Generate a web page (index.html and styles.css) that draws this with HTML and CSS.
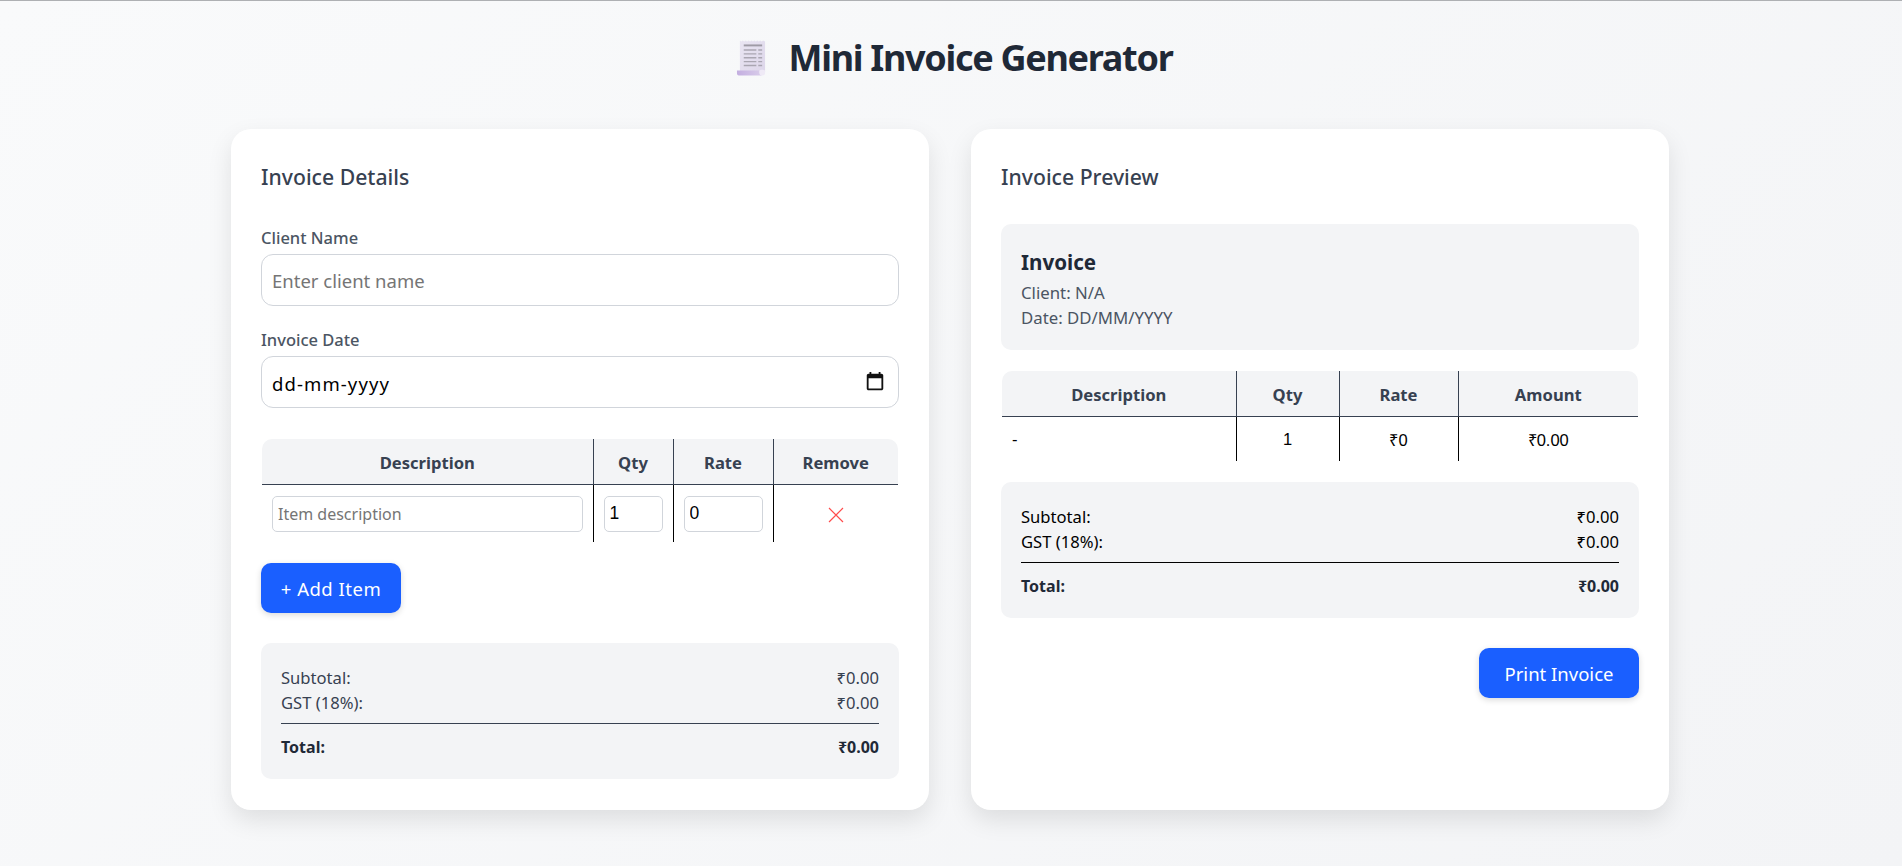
FILE: index.html
```html
<!DOCTYPE html>
<html lang="en">
<head>
<meta charset="utf-8">
<title>Mini Invoice Generator</title>
<link rel="stylesheet" href="styles.css">
</head>
<body>
<header class="page-head">
  <svg class="logo" viewBox="0 0 32 38" width="31" height="38" aria-hidden="true">
    <defs>
      <linearGradient id="paper" x1="0" y1="0" x2="1" y2="1"><stop offset="0" stop-color="#e9e5f2"/><stop offset="1" stop-color="#ddd6ea"/></linearGradient>
      <linearGradient id="roll" x1="0" y1="0" x2="1" y2="0"><stop offset="0" stop-color="#c3aee0"/><stop offset="1" stop-color="#d9cdea"/></linearGradient>
    </defs>
    <path d="M4 1l1.500 1L7 1l1.500 1L10 1l1.500 1L13 1l1.500 1L16 1l1.500 1L19 1l1.500 1L22 1l1.500 1L25 1l1.500 1L28 1l2 1v32H4z" fill="url(#paper)"/>
    <path d="M1 32h24v2c0 2 1 3 2 3H3c-1.500 0-2-1-2-2.500z" fill="url(#roll)"/>
    <path d="M24 32c1-1 5-1 6 0v3c0 1-1 2-3 2-2 0-3-1-3-3z" fill="#efeaf6"/>
    <path d="M8 5h19v2H8z" fill="#9f9ba6"/>
    <path d="M8 10h13v1.500H8zM23 10h4v1.500h-4zM8 14h13v1.500H8zM23 14h4v1.500h-4zM8 18h13v1.500H8zM23 18h4v1.500h-4zM8 22h13v1.500H8zM23 22h4v1.500h-4zM8 26h13v1.500H8zM23 26h4v1.500h-4z" fill="#aaa6b2"/>
  </svg>
  <h1 class="page-title">Mini Invoice Generator</h1>
</header>

<main class="columns">
  <section class="card">
    <h2 class="card-title card-title-form">Invoice Details</h2>
    <div class="field">
      <label class="field-label" for="client">Client Name</label>
      <input class="text-input" id="client" type="text" placeholder="Enter client name">
    </div>
    <div class="field">
      <span class="field-label">Invoice Date</span>
      <div class="text-input date-input">
        <span class="date-text">dd-mm-yyyy</span>
        <svg viewBox="0 0 24 24" width="22" height="22" aria-hidden="true"><path d="M19 3h-1V1h-2v2H8V1H6v2H5c-1.110 0-1.990.9-1.990 2L3 19c0 1.100.89 2 2 2h14c1.100 0 2-.9 2-2V5c0-1.100-.9-2-2-2zm0 16H5V8h14v11z" fill="#111"/></svg>
      </div>
    </div>

    <div class="table-wrap table-wrap-form">
      <table class="grid-table">
        <colgroup><col class="col-a"><col class="col-b"><col class="col-c"><col></colgroup>
        <thead><tr><th>Description</th><th>Qty</th><th>Rate</th><th>Remove</th></tr></thead>
        <tbody>
          <tr>
            <td><input class="cell-input cell-input-text" type="text" placeholder="Item description"></td>
            <td><input class="cell-input" type="text" value="1"></td>
            <td><input class="cell-input" type="text" value="0"></td>
            <td class="center">
              <button class="remove" type="button" aria-label="Remove">
                <svg viewBox="0 0 16 16" width="16" height="16" aria-hidden="true"><path d="M1 1l14 14M15 1L1 15" stroke="#ff4d4d" stroke-width="1.200" fill="none"/></svg>
              </button>
            </td>
          </tr>
        </tbody>
      </table>
    </div>

    <button class="btn btn-add" type="button">+ Add Item</button>

    <div class="summary">
      <div class="summary-row"><span>Subtotal:</span><span>₹0.00</span></div>
      <div class="summary-row"><span>GST (18%):</span><span>₹0.00</span></div>
      <div class="summary-row summary-total"><span>Total:</span><span>₹0.00</span></div>
    </div>
  </section>

  <section class="card">
    <h2 class="card-title">Invoice Preview</h2>
    <div class="preview-head">
      <h3 class="preview-title">Invoice</h3>
      <p class="preview-line">Client: N/A</p>
      <p class="preview-line">Date: DD/MM/YYYY</p>
    </div>

    <div class="table-wrap">
      <table class="grid-table grid-table-preview">
        <colgroup><col class="col-d"><col class="col-e"><col class="col-f"><col></colgroup>
        <thead><tr><th>Description</th><th>Qty</th><th>Rate</th><th>Amount</th></tr></thead>
        <tbody>
          <tr><td>-</td><td class="center">1</td><td class="center">₹0</td><td class="center">₹0.00</td></tr>
        </tbody>
      </table>
    </div>

    <div class="summary summary-preview">
      <div class="summary-row"><span>Subtotal:</span><span>₹0.00</span></div>
      <div class="summary-row"><span>GST (18%):</span><span>₹0.00</span></div>
      <div class="summary-row summary-total"><span>Total:</span><span>₹0.00</span></div>
    </div>

    <div class="actions"><button class="btn btn-print" type="button">Print Invoice</button></div>
  </section>
</main>
</body>
</html>
```
FILE: styles.css
```css
* { box-sizing: border-box; }

html, body { margin: 0; }

body {
  min-height: 866px;
  border-top: 1px solid #aeb0b3;
  background: linear-gradient(135deg, #f9fafb 0%, #f3f4f6 100%);
  font-family: "Noto Sans", "Open Sans", sans-serif;
  color: #1f2937;
  overflow: hidden;
}

.page-head {
  display: flex;
  justify-content: center;
  align-items: center;
  gap: 22px;
  height: 128px;
  padding-left: 6px;
  padding-bottom: 14px;
}

.logo { flex: none; }

.page-title {
  margin: 0;
  font-size: 36px;
  line-height: 48px;
  font-weight: 700;
  letter-spacing: -1.3px;
  color: #1f2937;
}

.columns {
  display: grid;
  grid-template-columns: 698px 698px;
  gap: 42px;
  width: 1438px;
  margin: 0 0 0 231px;
}

.card {
  background: #fff;
  border-radius: 20px;
  padding: 30px;
  height: 681px;
  box-shadow: 0 10px 25px rgba(0, 0, 0, 0.1);
}

.card-title {
  margin: 0 0 29px;
  font-size: 21.200px;
  line-height: 36px;
  font-weight: 500;
  color: #374151;
}

.card-title-form { margin-bottom: 31px; }

.field { margin-bottom: 22px; }

.field-label {
  display: block;
  margin-bottom: 4px;
  font-size: 16.500px;
  line-height: 24px;
  font-weight: 500;
  color: #4b5563;
}

.text-input {
  display: block;
  width: 100%;
  height: 52px;
  padding: 0 10px;
  border: 1px solid #d1d5db;
  border-radius: 12px;
  background: #fff;
  font: inherit;
  font-size: 18.500px;
  color: #000;
}

.text-input::placeholder { color: #757575; opacity: 1; }

.date-input {
  display: flex;
  align-items: center;
  justify-content: space-between;
  padding-right: 12px;
}

.date-input svg { flex: none; }

.date-text {
  padding-top: 2px;
  letter-spacing: 1.100px;
}

.table-wrap {
  margin: 0 1px;
  border-radius: 10px 10px 0 0;
  overflow: hidden;
}

.table-wrap-form { margin-top: 31px; }

.grid-table {
  width: 100%;
  table-layout: fixed;
  border-collapse: collapse;
}

.col-a { width: 331px; }
.col-b { width: 80px; }
.col-c { width: 100px; }
.col-d { width: 234px; }
.col-e { width: 103px; }
.col-f { width: 119px; }

.grid-table th {
  height: 45px;
  padding: 2px 0 0;
  background: #f3f4f6;
  border-right: 1px solid #374151;
  border-bottom: 1px solid #374151;
  font-size: 16.600px;
  font-weight: 700;
  color: #374151;
  text-align: center;
}

.grid-table td {
  height: 58px;
  padding: 1px 10px 0;
  border-right: 1px solid #000;
  font-family: "Liberation Sans", sans-serif;
  font-size: 16.500px;
  color: #000;
}

.grid-table th:last-child,
.grid-table td:last-child { border-right: 0; }

.grid-table-preview td { height: 45px; }

.center { text-align: center; }

.cell-input {
  display: block;
  width: 100%;
  height: 36px;
  padding: 0 5px;
  border: 1px solid #d1d5db;
  border-radius: 5px;
  background: #fff;
  font-family: "Liberation Sans", sans-serif;
  font-size: 17.500px;
  color: #000;
}

.cell-input-text {
  padding-top: 1px;
  font-family: "Noto Sans", "Open Sans", sans-serif;
  font-size: 16px;
}

.cell-input::placeholder { color: #757575; opacity: 1; }

.remove {
  display: inline-flex;
  padding: 0;
  border: 0;
  background: none;
  vertical-align: middle;
}

.btn {
  display: block;
  height: 50px;
  border: 0;
  border-radius: 10px;
  background: #1a5fff;
  color: #fff;
  font-family: inherit;
  font-size: 18.500px;
  box-shadow: 0 2px 6px rgba(0, 0, 0, 0.15);
}

.btn-add {
  width: 140px;
  margin-top: 21px;
  letter-spacing: 0.500px;
}

.btn-print { width: 160px; }

.summary {
  margin-top: 30px;
  padding: 22px 20px 19px;
  border-radius: 10px;
  background: #f3f4f6;
  color: #374151;
  font-size: 16.600px;
  line-height: 25px;
}

.summary-preview {
  margin-top: 21px;
  color: #000;
}

.summary-row {
  display: flex;
  justify-content: space-between;
}

.summary-total {
  margin-top: 8px;
  padding-top: 11px;
  border-top: 1px solid #374151;
  font-size: 16px;
  font-weight: 700;
  color: #1f2937;
}

.summary-preview .summary-total { border-top-color: #000; }

.preview-head {
  margin-bottom: 21px;
  padding: 20px;
  border-radius: 10px;
  background: #f3f4f6;
}

.preview-title {
  margin: 0;
  font-size: 20.600px;
  line-height: 36px;
  font-weight: 700;
  color: #1f2937;
}

.preview-line {
  margin: 0;
  font-size: 16.800px;
  line-height: 25px;
  color: #4b5563;
}

.actions {
  display: flex;
  justify-content: flex-end;
  margin-top: 30px;
}
```
